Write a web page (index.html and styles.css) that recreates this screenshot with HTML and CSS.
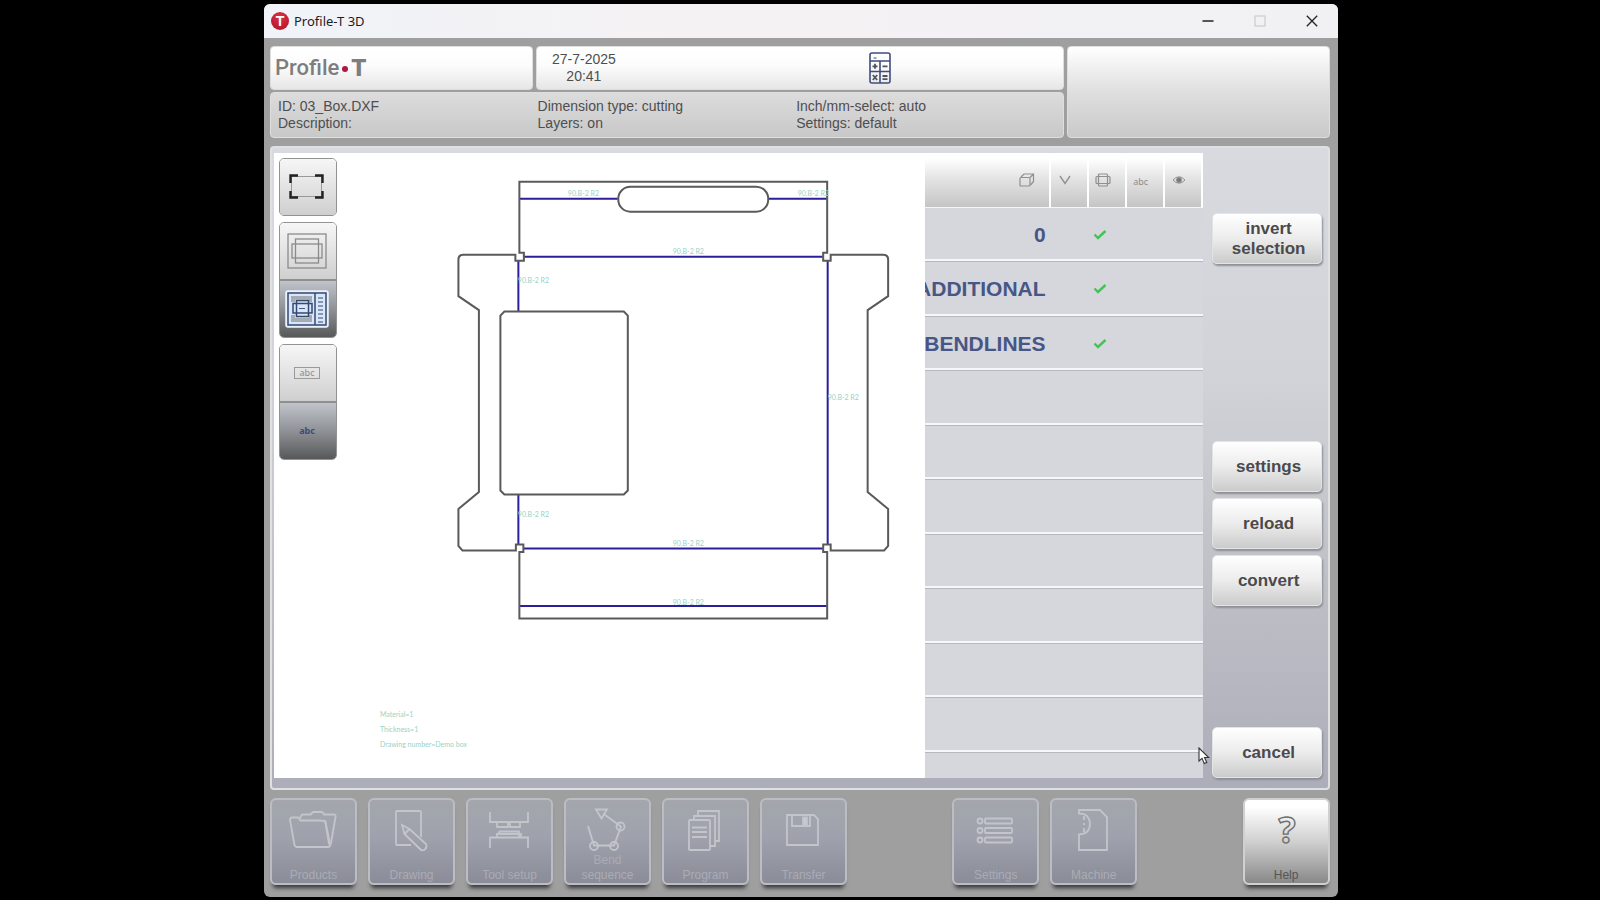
FILE: index.html
```html
<!DOCTYPE html>
<html lang="en">
<head>
<meta charset="utf-8">
<title>Profile-T 3D</title>
<link rel="stylesheet" href="styles.css">
</head>
<body>
<div class="window">
  <header class="titlebar">
    <span class="app-icon">T</span>
    <h1 class="app-title">Profile-T 3D</h1>
    <button class="win-btn" type="button" aria-label="Minimize"><svg width="12" height="12" viewBox="0 0 12 12"><path d="M0.500 6h11" stroke="#222" stroke-width="1.400"/></svg></button>
    <button class="win-btn" type="button" aria-label="Maximize" disabled><svg width="12" height="12" viewBox="0 0 12 12"><rect x="1" y="1" width="10" height="10" fill="none" stroke="#c4c4c8"/></svg></button>
    <button class="win-btn" type="button" aria-label="Close"><svg width="12" height="12" viewBox="0 0 12 12"><path d="M0.800 0.800l10.400 10.400M11.200 0.800L0.800 11.200" stroke="#222" stroke-width="1.300"/></svg></button>
  </header>

  <div class="body">
    <section class="info">
      <div class="tile brand"><span>Profile</span><i class="brand-dot"></i><b>T</b></div>
      <div class="tile clock">
        <div class="clock-time">27-7-2025<br>20:41</div>
        <button class="calc" type="button" aria-label="Calculator">
          <svg width="22" height="32" viewBox="0 0 22 32" fill="none" stroke="#3f4d7d" stroke-width="1.600">
            <rect x="1" y="1" width="20" height="30" rx="2"/>
            <path d="M1 9h20M1 19.500h20M11 9v22"/>
            <g stroke="#50525c" stroke-width="1.800"><path d="M3.500 14.300h5M6 11.800v5M13.500 14.300h5M3.800 23l4.400 5M8.200 23l-4.400 5M13.500 24h5M13.500 27.200h5"/></g>
            <path d="M4.500 6h3" stroke-width="1"/>
          </svg>
        </button>
      </div>
      <div class="tile status"></div>
      <div class="tile details">
        <p>ID: 03_Box.DXF<br>Description:</p>
        <p>Dimension type: cutting<br>Layers: on</p>
        <p>Inch/mm-select: auto<br>Settings: default</p>
      </div>
    </section>

    <main class="panel">
      <section class="drawing">
        <div class="tools">
          <div class="tool-group">
            <button class="tool" type="button" aria-label="Fit to screen">
              <svg width="36" height="26" viewBox="0 0 36 26" fill="none"><rect x="2.500" y="2.500" width="30" height="20" stroke="#999"/><path d="M1.500 9V1.500H9M26 1.500h7.500V9M33.500 17v6.500H26M9 23.500H1.500V17" stroke="#222" stroke-width="2.400"/></svg>
            </button>
          </div>
          <div class="tool-group">
            <button class="tool" type="button" aria-label="Drawing only">
              <svg width="40" height="36" viewBox="0 0 40 36" fill="none" stroke="#8b8b8b" stroke-width="1.300"><rect x="1" y="1" width="38" height="34"/><rect x="8.500" y="6" width="23" height="24"/><rect x="5" y="11" width="30" height="14"/></svg>
            </button>
            <button class="tool active" type="button" aria-label="Drawing with layer list">
              <svg width="44" height="38" viewBox="0 0 44 38" fill="none" stroke="#34496f" stroke-width="1.500"><rect x="1" y="1" width="42" height="36" rx="2" fill="#d9e6fa" stroke="#eef4ff"/><rect x="3" y="3" width="38" height="32"/><path d="M30 3v32"/><path d="M6 6h21v6h-3V9.500H10V12H6zM6 25h4v3h14v-3h3v7H6z" fill="#a6aab2" stroke="none"/><path d="M8 13.500h19v9.500H8z"/><path d="M11.500 10.500h12v16h-12z"/><path d="M14 18.500h6" stroke-width="0.900"/><path d="M33 8h5M33 12h5M33 16h5M33 20h5M33 24h5M33 28h5M33 32h5" stroke-width="1"/></svg>
            </button>
          </div>
          <div class="tool-group">
            <button class="tool" type="button" aria-label="Framed text"><span class="abc framed">abc</span></button>
            <button class="tool active" type="button" aria-label="Plain text"><span class="abc">abc</span></button>
          </div>
        </div>
        <svg class="flat" viewBox="337 153 588 625" role="img" aria-label="Unfolded box">
          <g class="bends"><path d="M520 198.500H618M769 198.500H827M524 256.500H823M518.500 260V311M518.500 495V544M828 260V544M524 548.500H823M520 606H827"/></g>
          <g class="cuts">
            <path d="M519.500 181.500H827.500V252.500H823.500V260.500H831V254.500H883.500Q888.500 254.500 888.500 259.500V296L868 310V492L888.500 509V546L884.500 550.500H831V544.500H823.500V552H827.500V618.500H519.500V552H523.500V544.500H516V550.500H462.500L458.500 546V509L479 492V310L458.500 296V259.500Q458.500 254.500 463.500 254.500H515.500V260.500H524V252.500H519.500Z"/>
            <rect x="618.500" y="186.500" width="150" height="25" rx="12"/>
            <path d="M504.500 311.500H624L628 315.500V490.500L624 494.500H504.500L500.500 490.500V315.500Z"/>
          </g>
          <g class="notes">
            <text x="568" y="196">90.B-2 R2</text><text x="798" y="196">90.B-2 R2</text>
            <text x="673" y="254">90.B-2 R2</text><text x="518" y="283">90.B-2 R2</text>
            <text x="828" y="400">90.B-2 R2</text><text x="518" y="517">90.B-2 R2</text>
            <text x="673" y="546">90.B-2 R2</text><text x="673" y="605">90.B-2 R2</text>
            <text x="380" y="717">Material=1</text><text x="380" y="732">Thickness=1</text><text x="380" y="747">Drawing number=Demo box</text>
          </g>
        </svg>
      </section>

      <section class="layers">
        <table>
          <colgroup><col><col class="narrow"><col class="narrow"><col class="narrow"><col class="narrow"></colgroup>
          <thead>
            <tr>
              <th scope="col" class="wide" aria-label="Layer"><svg width="16" height="14" viewBox="0 0 16 14" fill="none" stroke="#8f8f8f" stroke-width="1.200"><rect x="1" y="4.500" width="10" height="8.500" rx="1"/><path d="M2 4L5 1H14.500V8.500L11.500 12M14.500 1L11 4.500"/></svg></th>
              <th scope="col" aria-label="Bend"><svg width="12" height="10" viewBox="0 0 12 10" fill="none" stroke="#929292" stroke-width="1.400"><path d="M1 1l5 7.500L11 1"/></svg></th>
              <th scope="col" aria-label="Contour"><svg width="16" height="14" viewBox="0 0 16 14" fill="none" stroke="#8f8f8f" stroke-width="1.200"><rect x="1" y="3.500" width="14" height="7" rx="1"/><rect x="3.500" y="1" width="9" height="12" rx="1"/></svg></th>
              <th scope="col"><span class="abc">abc</span></th>
              <th scope="col" aria-label="Visible"><svg width="14" height="10" viewBox="0 0 14 10" fill="none" stroke="#929292"><path d="M1 5Q7-1.500 13 5Q7 11.500 1 5Z"/><circle cx="7" cy="5" r="2.500" fill="#777"/></svg></th>
            </tr>
          </thead>
          <tbody>
            <tr><td><div class="name">0</div></td><td></td><td class="mark"><svg width="14" height="10" viewBox="0 0 14 10"><path d="M1.500 4.500L5 8L12.500 1" fill="none" stroke="#42c455" stroke-width="2.400"/></svg></td><td></td><td></td></tr>
            <tr><td><div class="name">ADDITIONAL</div></td><td></td><td class="mark"><svg width="14" height="10" viewBox="0 0 14 10"><path d="M1.500 4.500L5 8L12.500 1" fill="none" stroke="#42c455" stroke-width="2.400"/></svg></td><td></td><td></td></tr>
            <tr><td><div class="name">BENDLINES</div></td><td></td><td class="mark"><svg width="14" height="10" viewBox="0 0 14 10"><path d="M1.500 4.500L5 8L12.500 1" fill="none" stroke="#42c455" stroke-width="2.400"/></svg></td><td></td><td></td></tr>
            <tr><td colspan="5"></td></tr>
            <tr><td colspan="5"></td></tr>
            <tr><td colspan="5"></td></tr>
            <tr><td colspan="5"></td></tr>
            <tr><td colspan="5"></td></tr>
            <tr><td colspan="5"></td></tr>
            <tr><td colspan="5"></td></tr>
            <tr><td colspan="5"></td></tr>
          </tbody>
        </table>
      </section>

      <aside class="actions">
        <button class="action" type="button">invert<br>selection</button>
        <div class="space-large"></div>
        <button class="action" type="button">settings</button>
        <button class="action" type="button">reload</button>
        <button class="action" type="button">convert</button>
        <div class="space-small"></div>
        <button class="action" type="button">cancel</button>
      </aside>

      <svg class="pointer" width="12" height="18" viewBox="0 0 12 18"><path d="M1 1V14L4 11.300L6.300 16.500L8.800 15.400L6.500 10.500H10.700Z" fill="#fff" stroke="#333" stroke-width="1.100"/></svg>
    </main>

    <nav class="dock">
      <button class="dock-btn" type="button" disabled>
        <svg viewBox="0 0 48 44"><path d="M1 8Q1 5.500 3 5.500H9L11.500 8.500H29Q36 8.500 36.500 10L41 32Q41.500 35 39 35H7.500Q6 35 5.500 33Z"/><path d="M11 6.500Q12 2.500 14 2.500H22Q23 0 25 0H32Q34 0 35 2.500H45Q47 2.500 46.500 5L42 31Q41 35 38 35M36 8L40 32"/></svg>
        Products</button>
      <button class="dock-btn" type="button" disabled>
        <svg viewBox="0 0 48 44"><path d="M24 33H10Q9 33 9 32V0Q9-1 10-1H33Q34-1 34 0V25"/><path d="M15 13L22.500 17L39 32Q40.500 36 37 38Q35 39 33 37L17.500 22Z M17.500 22L22.500 17"/></svg>
        Drawing</button>
      <button class="dock-btn" type="button" disabled>
        <svg viewBox="0 0 48 44"><path d="M5 0V10H43V0M12 10V15H23V10M25 10V15H35V10M14 19.500H34V25M12 25V22H36V25M5 36V25.500H43V36M14 19.500V22"/></svg>
        Tool setup</button>
      <button class="dock-btn" type="button" disabled>
        <svg viewBox="0 0 48 44"><path d="M5 14L11 33.500H31L38 14.500L20 1.500"/><path d="M13-2.500H24L18.500 6.500Z"/><circle cx="11" cy="34" r="4"/><circle cx="31" cy="34" r="4"/><circle cx="37.500" cy="14.500" r="4"/></svg>
        Bend<br>sequence</button>
      <button class="dock-btn" type="button" disabled>
        <svg viewBox="0 0 48 44"><path d="M17 4V-1H38V29H34M13 8V4H34V34H29"/><rect x="8" y="8" width="21" height="30" rx="1"/><path d="M11 15.500H26M11 20H26M11 25H26"/></svg>
        Program</button>
      <button class="dock-btn" type="button" disabled>
        <svg viewBox="0 0 48 44"><path d="M8 3H35L39 7V33H8ZM13 3V14H31V3"/><rect class="solid" x="24" y="5.500" width="4" height="7"/></svg>
        Transfer</button>
      <button class="dock-btn push" type="button" disabled>
        <svg viewBox="0 0 48 44"><circle cx="9" cy="9" r="2.500"/><circle cx="9" cy="18.500" r="2.500"/><circle cx="9" cy="28" r="2.500"/><rect x="14" y="6.500" width="27" height="5" rx="1"/><rect x="14" y="16" width="27" height="5" rx="1"/><rect x="14" y="25.500" width="27" height="5" rx="1"/></svg>
        Settings</button>
      <button class="dock-btn" type="button" disabled>
        <svg viewBox="0 0 48 44"><path d="M10-2H31L38 5V38H10V22.500Q21 22 21 11.500Q20 1 10 1.500Z"/><path d="M15 4V8M15 11V13M15 16V20"/></svg>
        Machine</button>
      <button class="dock-btn help push" type="button">
        <svg viewBox="0 0 48 44"><text x="25" y="31" text-anchor="middle">?</text></svg>
        Help</button>
    </nav>
  </div>
</div>
</body>
</html>
```
FILE: styles.css
```css
* { box-sizing: border-box; }
html, body { height: 100%; }
body {
  margin: 0;
  padding: 4px 16.4% 3px 16.5%;
  background: #000;
  color: #4e4e50;
  font: 14px/17px "Liberation Sans", Arial, sans-serif;
}
button { padding: 0; border: 0; background: none; color: inherit; font: inherit; }
svg { display: block; flex: none; }

.window {
  display: flex;
  flex-direction: column;
  height: 100%;
  border-radius: 6px;
  background: #9f9f9f;
  overflow: hidden;
}
.titlebar {
  display: flex;
  align-items: center;
  height: 34px;
  padding-left: 7px;
  background: linear-gradient(90deg, #f0f3f8, #f5f2f3 40%, #f1f1f3);
}
.app-icon {
  width: 18px;
  height: 18px;
  border-radius: 50%;
  background: radial-gradient(circle at 50% 30%, #dd3145, #ad1029);
  color: #fff;
  font: bold 14px/18px "Liberation Sans", sans-serif;
  text-align: center;
}
.app-title {
  flex: 1;
  margin: 0 0 0 5px;
  color: #1c1c1c;
  font: 13px/18px "Noto Sans", sans-serif;
}
.win-btn { display: flex; align-items: center; justify-content: center; width: 52px; height: 34px; }

.body {
  flex: 1;
  display: flex;
  flex-direction: column;
  gap: 8px;
  min-height: 0;
  padding: 8px 8px 12px 6px;
}
.info {
  display: grid;
  grid-template-columns: 263fr 528fr 263fr;
  grid-template-rows: 44px 46px;
  gap: 2px 3px;
}
.tile { border: 1px solid #dedede; border-radius: 4px; }
.brand, .clock { background: linear-gradient(#fff, #fcfcfc 45%, #e6e6e6); }
.brand {
  display: flex;
  align-items: center;
  padding-left: 4px;
  color: #7d7e80;
  font: 500 22px/26px Roboto, sans-serif;
}
.brand-dot { width: 6px; height: 6px; margin: 2px 3px 0 3px; border-radius: 50%; background: #ad1740; }
.brand b { font-size: 24px; font-weight: 900; }
.clock { display: grid; grid-template-columns: 94px 1fr; align-items: center; }
.clock-time { text-align: center; }
.calc { justify-self: center; margin-left: 66px; }
.status { grid-column: 3; grid-row: 1 / 3; background: linear-gradient(#fff, #dfdfdf 50%, #c9c9c9); }
.details {
  grid-column: 1 / 3;
  display: grid;
  grid-template-columns: 260fr 259fr 267fr;
  align-items: center;
  padding-left: 7px;
  background: linear-gradient(#dcdcdc, #c8c8c8);
}
.details p { margin: 0; }

.panel {
  position: relative;
  flex: 1;
  display: grid;
  grid-template-columns: 1fr 278px 125px;
  grid-template-rows: 100%;
  min-height: 0;
  padding: 5px 0 10px 2px;
  border: 2px solid #dfe0e3;
  border-radius: 4px;
  background: linear-gradient(#d9dae0, #d2d3d8 35%, #bebfc5 70%, #adadba);
}
.drawing { display: flex; min-width: 0; background: #fff; }
.tools { display: flex; flex-direction: column; gap: 6px; padding: 5px 0 0 5px; }
.tool-group { border: 1px solid #929292; border-radius: 5px; overflow: hidden; }
.tool {
  display: flex;
  align-items: center;
  justify-content: center;
  width: 56px;
  height: 56px;
  padding-right: 2px;
  background: linear-gradient(#f6f6f6, #e3e3e3 50%, #cfcfcf);
}
.tool + .tool { height: 58px; border-top: 2px solid #8f8f8f; }
.tool.active { background: linear-gradient(#c0c4ca, #8e9196 50%, #585858); color: #3e4a78; }
.abc { font: 9px/10px "Noto Sans", sans-serif; color: #8c8c8c; }
.framed { padding: 0 5px; border: 1px solid #9a9a9a; }
.active .abc { color: #3e4a78; font-weight: bold; }
.flat { flex: 1; min-width: 0; height: 100%; }
.notes { fill: #9ad2c5; font: 7px Lato, sans-serif; }
.bends { fill: none; stroke: #2c1f9e; stroke-width: 2px; }
.cuts { fill: none; stroke: #5a5a5a; stroke-width: 2px; }

.layers { min-height: 0; overflow: hidden; background: #d6d7dd; }
.layers table { width: 100%; border-collapse: separate; border-spacing: 0; table-layout: fixed; }
.narrow { width: 38px; }
th {
  height: 55px;
  padding: 0 8px 0 0;
  border-right: 2px solid #fff;
  border-bottom: 1px solid #f5f5f5;
  background: linear-gradient(#fff 10%, #e2e2e2 50%, #c5c5c5);
  font-weight: normal;
}
th svg { margin: 0 auto; }
th.wide { padding-right: 14px; }
th.wide svg { margin-right: 0; }
td {
  height: 54px;
  padding: 0;
  border-bottom: 1px solid #b7b8bd;
  box-shadow: inset 0 -2px #f6f7fa;
}
tr:nth-child(even) td { height: 55px; }
.name {
  display: flex;
  justify-content: flex-end;
  padding-right: 5px;
  overflow: hidden;
  color: #475685;
  font: bold 21px/24px "Liberation Sans", Arial, sans-serif;
}
.mark svg { margin-left: 4px; }

.actions { display: flex; flex-direction: column; gap: 6px; padding: 60px 6px 0 9px; }
.action {
  flex: none;
  height: 51px;
  padding-left: 4px;
  border: 1px solid #e4e4e4;
  border-radius: 5px;
  background: linear-gradient(#fff, #ececec 50%, #cbcbcb);
  box-shadow: 1px 2px 2px #8e8e96;
  color: #4a4a4c;
  font: bold 17px/20px "Liberation Sans", Arial, sans-serif;
}
.space-large { flex: 165; }
.space-small { flex: 109; }
.pointer { position: absolute; right: 118px; bottom: 23px; }

.dock { display: flex; gap: 11px; }
.dock-btn {
  display: flex;
  flex-direction: column;
  align-items: center;
  justify-content: flex-end;
  position: relative;
  width: 87px;
  height: 87px;
  border: 2px solid #bbbdc3;
  border-radius: 6px;
  background: linear-gradient(#a3a7ac, #9fa2ad 45%, #8a8c98);
  box-shadow: 0 6px 4px -3px #38383c;
  color: #aaacb5;
  font: 12px/15px "Liberation Sans", Arial, sans-serif;
}
.dock-btn svg {
  position: absolute;
  top: 12px;
  left: 17px;
  width: 48px;
  height: 44px;
  overflow: visible;
  fill: none;
  stroke: #c3c5cb;
  stroke-width: 1.8px;
}
.dock-btn .solid { fill: #c9cad0; }
.push { margin-left: auto; }
.help {
  border-color: #d0d0d0;
  background: linear-gradient(#fff 10%, #d0d0d0 50%, #858585) border-box;
  color: #555;
}
.help svg { stroke: #707070; stroke-width: 1.4px; font: bold 36px "Open Sans", sans-serif; }
```
